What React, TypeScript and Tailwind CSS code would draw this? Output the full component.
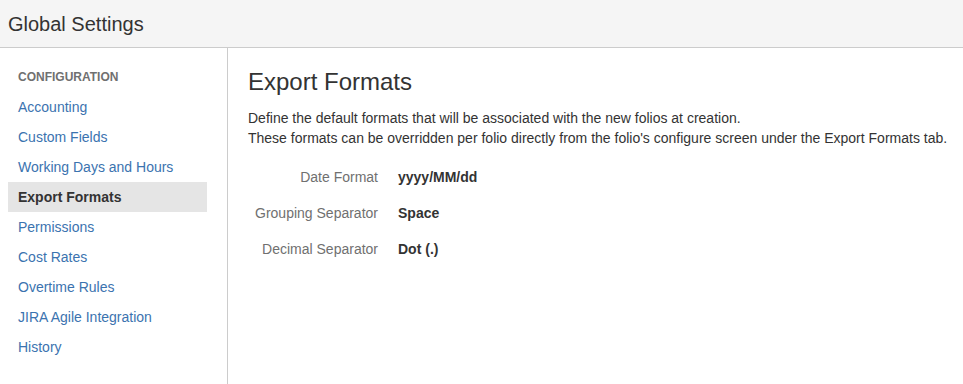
import React from "react";

const items = [
  "Accounting",
  "Custom Fields",
  "Working Days and Hours",
  "Export Formats",
  "Permissions",
  "Cost Rates",
  "Overtime Rules",
  "JIRA Agile Integration",
  "History",
];

const fields: [string, string][] = [
  ["Date Format", "yyyy/MM/dd"],
  ["Grouping Separator", "Space"],
  ["Decimal Separator", "Dot (.)"],
];

export default function App() {
  return (
    <div className="flex h-[384px] flex-col bg-white text-[#333333] [font-family:'Liberation_Sans',Arial,sans-serif]">
      <div className="flex h-[48px] shrink-0 items-center border-b border-[#cccccc] bg-[#f5f5f5] px-[8px]">
        <h1 className="text-[20px] leading-[24px] text-[#333333]">Global Settings</h1>
      </div>
      <div className="flex flex-1">
        <div className="w-[228px] shrink-0 border-r border-[#cccccc] pl-[8px] pr-[20px] pt-[20px]">
          <div className="mb-[6px] pl-[10px] text-[12px] font-bold leading-[18px] text-[#707070]">CONFIGURATION</div>
          <ul>
            {items.map((it) => {
              const active = it === "Export Formats";
              return (
                <li
                  key={it}
                  className={
                    active
                      ? "flex h-[30px] items-center bg-[#e5e5e5] pl-[10px] text-[14px] font-bold text-[#333333]"
                      : "flex h-[30px] items-center pl-[10px] text-[14px] text-[#3b73af]"
                  }
                >
                  {it}
                </li>
              );
            })}
          </ul>
        </div>
        <div className="flex-1 pl-[20px] pt-[19px]">
          <h2 className="text-[24px] leading-[30px] text-[#333333]">Export Formats</h2>
          <div className="mt-[11px] text-[14px] leading-[20px]">
            <p>Define the default formats that will be associated with the new folios at creation.</p>
            <p>These formats can be overridden per folio directly from the folio's configure screen under the Export Formats tab.</p>
          </div>
          <div className="mt-[11px] flex flex-col">
            {fields.map(([l, v]) => (
              <div key={l} className="flex h-[36px] items-center">
                <div className="w-[130px] text-right text-[14px] text-[#707070]">{l}</div>
                <div className="pl-[20px] text-[14px] font-bold text-[#333333]">{v}</div>
              </div>
            ))}
          </div>
        </div>
      </div>
    </div>
  );
}
